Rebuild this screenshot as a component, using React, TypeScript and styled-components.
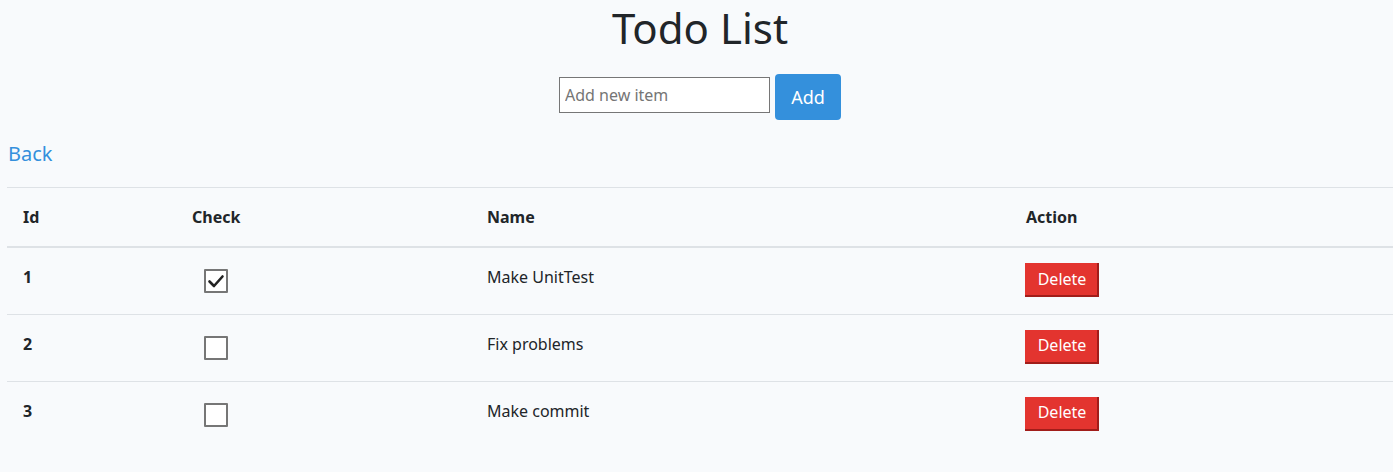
import React, { useState } from 'react'
import styled, { createGlobalStyle } from 'styled-components'

const GlobalStyle = createGlobalStyle`
    body {
        margin: 0;
        background: #f8fafc;
        color: #212529;
        font-family: "Noto Sans", Lato, sans-serif;
        font-size: 16px;
    }
`

const Page = styled.div`
    padding: 0 0 0 7px;
`
const Title = styled.h1`
    margin: 0;
    text-align: center;
    font-size: 42px;
    font-weight: 400;
    line-height: 56px;
`
const AddForm = styled.form`
    display: flex;
    justify-content: center;
    align-items: flex-start;
    gap: 5px;
    margin-top: 18px;
`
const ItemInput = styled.input`
    width: 211px;
    height: 36px;
    margin-top: 3px;
    box-sizing: border-box;
    border: 1px solid #767676;
    background: #fff;
    padding: 0 5px;
    font-family: inherit;
    font-size: 16px;
    &::placeholder {
        color: #757575;
    }
`
const AddButton = styled.button`
    width: 66px;
    height: 46px;
    border: none;
    border-radius: 4px;
    background: #3490dc;
    color: #fff;
    font-family: inherit;
    font-size: 18px;
`
const BackLink = styled.a`
    display: block;
    margin: 19px 0 0 1px;
    color: #3490dc;
    font-size: 20px;
    line-height: 30px;
    text-decoration: none;
    width: max-content;
`
const Table = styled.table`
    margin-top: 18px;
    width: 100%;
    table-layout: fixed;
    border-collapse: collapse;
`
const HeadCell = styled.th<{ $width?: number; $first?: boolean }>`
    width: ${({ $width }) => ($width ? `${$width}px` : 'auto')};
    text-align: left;
    font-weight: 700;
    padding: 0 12px 0 ${({ $first }) => ($first ? 16 : 12)}px;
    height: 58px;
    border-top: 1px solid #dee2e6;
    border-bottom: 2px solid #dee2e6;
    vertical-align: middle;
`
const Row = styled.tr`
    border-bottom: 1px solid #dee2e6;
    &:last-child {
        border-bottom: none;
    }
`
const Cell = styled.td<{ $first?: boolean }>`
    box-sizing: border-box;
    height: 67px;
    padding: 16px 12px 0 ${({ $first }) => ($first ? 16 : 12)}px;
    vertical-align: top;
    font-weight: ${({ $first }) => ($first ? 700 : 400)};
    line-height: 26px;
`
const CheckCell = styled(Cell)`
    padding-left: 24px;
    padding-top: 21px;
`
const CheckBox = styled.span<{ $checked: boolean }>`
    display: block;
    width: 24px;
    height: 24px;
    box-sizing: border-box;
    border: 2px solid #767676;
    border-radius: 1px;
    background: #fff;
    cursor: pointer;
    svg {
        display: ${({ $checked }) => ($checked ? 'block' : 'none')};
    }
`
const ActionCell = styled(Cell)`
    padding-top: 15px;
    padding-left: 11px;
`
const DeleteButton = styled.button`
    display: block;
    width: 74px;
    height: 34px;
    box-sizing: border-box;
    border: none;
    border-right: 2px solid #a11d1a;
    border-bottom: 2px solid #a11d1a;
    background: #e3342f;
    color: #fff;
    font-family: inherit;
    font-size: 16px;
    padding: 0 0 1px 2px;
`

interface TodoType {
    id: number
    name: string
    done: boolean
}

const initialTodos: TodoType[] = [
    { id: 1, name: 'Make UnitTest', done: true },
    { id: 2, name: 'Fix problems', done: false },
    { id: 3, name: 'Make commit', done: false },
]

export default function App() {
    const [todos, setTodos] = useState(initialTodos)

    const toggle = (id: number) =>
        setTodos(todos.map((t) => (t.id === id ? { ...t, done: !t.done } : t)))

    return (
        <Page>
            <GlobalStyle />
            <Title>Todo List</Title>
            <AddForm onSubmit={(e) => e.preventDefault()}>
                <ItemInput placeholder="Add new item" />
                <AddButton type="submit">Add</AddButton>
            </AddForm>
            <BackLink href="#">Back</BackLink>
            <Table>
                <thead>
                    <tr>
                        <HeadCell $width={145} $first>
                            Id
                        </HeadCell>
                        <HeadCell $width={271}>Check</HeadCell>
                        <HeadCell $width={515}>Name</HeadCell>
                        <HeadCell>Action</HeadCell>
                    </tr>
                </thead>
                <tbody>
                    {todos.map((todo) => (
                        <Row key={todo.id}>
                            <Cell $first>{todo.id}</Cell>
                            <CheckCell>
                                <CheckBox $checked={todo.done} onClick={() => toggle(todo.id)}>
                                    <svg width="20" height="20" viewBox="0 0 20 20">
                                        <path
                                            d="M3.5 10.5 L8 15 L16.5 5.5"
                                            fill="none"
                                            stroke="#222"
                                            strokeWidth="2.6"
                                            strokeLinecap="round"
                                            strokeLinejoin="round"
                                        />
                                    </svg>
                                </CheckBox>
                            </CheckCell>
                            <Cell>{todo.name}</Cell>
                            <ActionCell>
                                <DeleteButton>Delete</DeleteButton>
                            </ActionCell>
                        </Row>
                    ))}
                </tbody>
            </Table>
        </Page>
    )
}
